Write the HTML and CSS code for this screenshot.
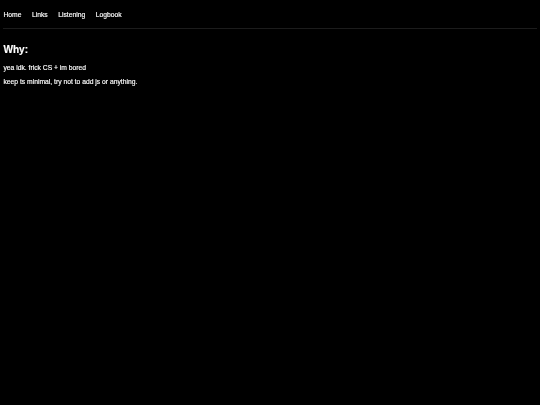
FILE: index.html
```html
<!DOCTYPE html>
<html>
<head>
<meta charset="utf-8">
<link rel="stylesheet" href="styles.css">
</head>
<body>
<nav class="nav">
  <a href="#">Home</a>
  <a href="#">Links</a>
  <a href="#">Listening</a>
  <a href="#">Logbook</a>
</nav>
<main class="content">
  <h2 class="title">Why:</h2>
  <p>yea idk. frick CS + im bored</p>
  <p>keep ts minimal, try not to add js or anything.</p>
</main>
</body>
</html>
```
FILE: styles.css
```css
html, body {
  background: #000;
}
body {
  margin: 0;
  padding: 0 3.4px;
  color: #fff;
  font-family: "Liberation Sans", Arial, sans-serif;
  font-size: 6.75px;
  -webkit-font-smoothing: antialiased;
  -webkit-text-stroke: 0.15px #fff;
  will-change: transform;
}
.nav {
  display: flex;
  gap: 10.5px;
  padding: 11px 0 9.5px;
  border-bottom: 1px solid #1c1c1c;
}
.nav a {
  color: #fff;
  text-decoration: none;
}
.content {
  padding-top: 7.5px;
}
.title {
  font-size: 10.1px;
  margin: 8px 0 8.5px;
}
.content p {
  margin: 0 0 7px;
}
```
